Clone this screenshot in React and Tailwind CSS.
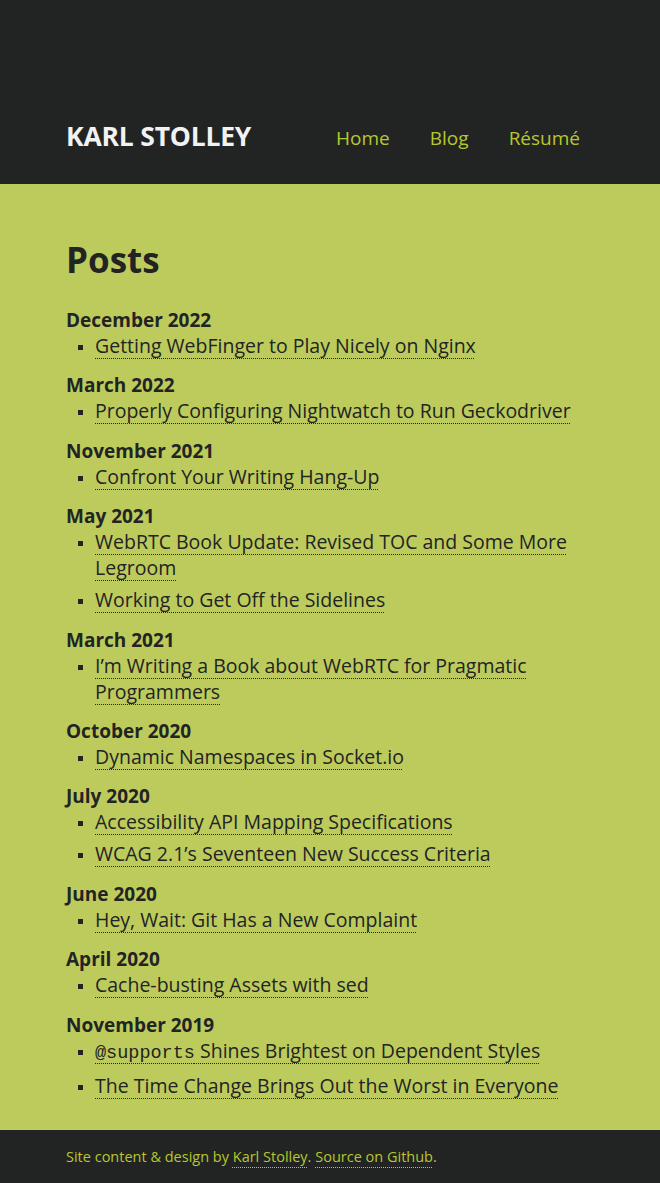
import React from "react";

const groups = [
  { month: "December 2022", posts: ["Getting WebFinger to Play Nicely on Nginx"] },
  { month: "March 2022", posts: ["Properly Configuring Nightwatch to Run Geckodriver"] },
  { month: "November 2021", posts: ["Confront Your Writing Hang-Up"] },
  {
    month: "May 2021",
    posts: ["WebRTC Book Update: Revised TOC and Some More Legroom", "Working to Get Off the Sidelines"],
  },
  { month: "March 2021", posts: ["I’m Writing a Book about WebRTC for Pragmatic Programmers"] },
  { month: "October 2020", posts: ["Dynamic Namespaces in Socket.io"] },
  {
    month: "July 2020",
    posts: ["Accessibility API Mapping Specifications", "WCAG 2.1’s Seventeen New Success Criteria"],
  },
  { month: "June 2020", posts: ["Hey, Wait: Git Has a New Complaint"] },
  { month: "April 2020", posts: ["Cache-busting Assets with sed"] },
  {
    month: "November 2019",
    posts: ["@supports", "The Time Change Brings Out the Worst in Everyone"],
  },
];

const link = "underline decoration-dotted decoration-1 underline-offset-[5px]";

export default function App() {
  return (
    <div className="min-h-[1183px] flex flex-col bg-[#bdcb5c] text-[#222424] font-['Open_Sans',sans-serif]">
      {/* header */}
      <header className="h-[184px] bg-[#222424] flex items-end justify-between px-[66px] pb-[31px]">
        <div className="text-[26.5px] font-bold text-[#f2f2f2] leading-[1.2] tracking-[-0.2px]">KARL STOLLEY</div>
        <nav className="flex gap-[40px] text-[19px] text-[#b7c72d] leading-[1.2] mr-[14px] mb-[3px]">
          <a>Home</a>
          <a>Blog</a>
          <a>Résumé</a>
        </nav>
      </header>

      {/* posts */}
      <main className="flex-1 px-[66px] pt-[55px] pb-[8px]">
        <h1 className="text-[35px] font-bold leading-[1.2] mb-[26px]">Posts</h1>
        {groups.map((g) => (
          <section key={g.month} className="mb-[13.4px]">
            <h2 className="text-[19px] font-bold leading-[26px]">{g.month}</h2>
            <ul className="list-[square] pl-[29px] flex flex-col gap-[6px]">
              {g.posts.map((p) => (
                <li key={p} className="text-[19.5px] leading-[26px] marker:text-[14px]">
                  {p === "@supports" ? (
                    <a className={link}>
                      <code className="font-['Liberation_Mono',monospace] text-[18.5px]">@supports</code> Shines Brightest on Dependent Styles
                    </a>
                  ) : (
                    <a className={link}>{p}</a>
                  )}
                </li>
              ))}
            </ul>
          </section>
        ))}
      </main>

      {/* footer */}
      <footer className="h-[53px] bg-[#222424] px-[66px] flex items-center text-[14.5px] text-[#b7c72d]">
        <p>
          Site content &amp; design by <a className={link + " underline-offset-[3px]"}>Karl Stolley</a>.{" "}
          <a className={link + " underline-offset-[3px]"}>Source on Github</a>.
        </p>
      </footer>
    </div>
  );
}
